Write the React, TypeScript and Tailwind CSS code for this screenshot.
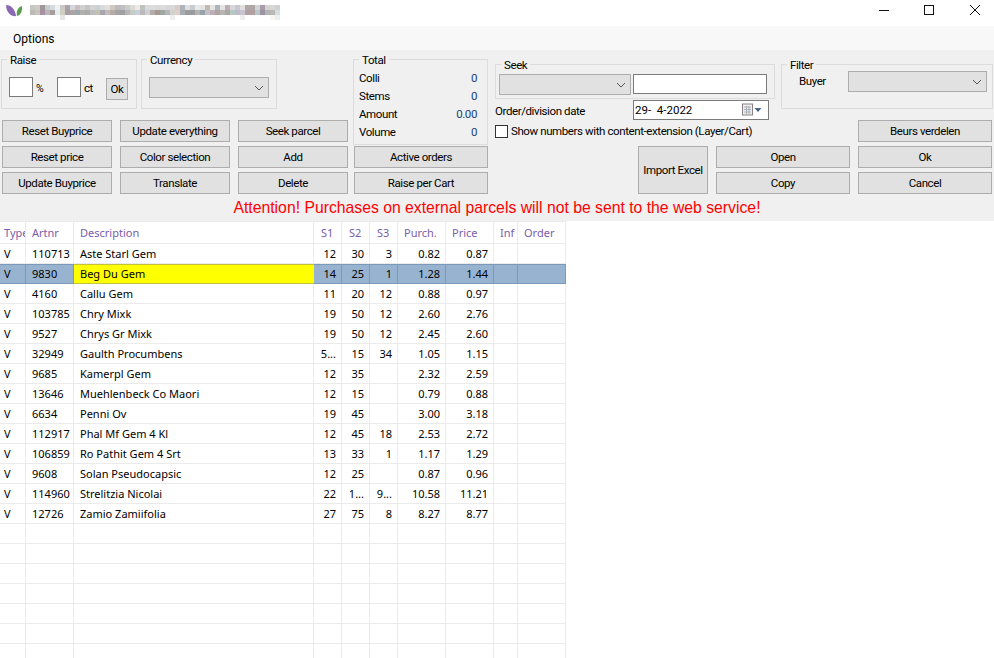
import React from "react";

const row1 = "c9c7c4 cdcbc8 a09696 c3cbd1 d6dbe0 eef0f2 cdc8c8 aaa3a8 d6d6dc c9bfc2 d0d0cc c4c4c4 d4d4d4 c9d3d2 d9dadc e2dfe0 d3c8c0 bcbcbc c0c0c2 c9cdcc d9dbd8 f0e8e4 bfc2c0 d9dade dcdcdc d9d9d9 dcdcdc d8d8dc dcd8d8 d9ccc8 b0b4b8 e0e0e4 c8ccd0 e8e8e4 e0e4e4 c4b8b4 e4e4e4 b0b4b8 e4e4e4 c0acb4 d8d8dc c8c8d0 e0e0e0 b0a8a8 b0a4a4 d0d4d4 a89cac d4d4d0 d8d8d4 d0d0d4".split(" ");
const row2 = "bdb9b4 c7c4bd ab8fa5 bbb8bb a59e9b e2ecf4 d0cfc0 a59ea6 aca4a6 9fa7ae b0b0ac acacac bcbcbc c4c0b2 a8a6ae c0bcb8 b8aaa8 a4a4a4 a0a0a2 b8b6b4 c8cac8 c4d0dc bcbab8 cfcfd8 b4aca8 a89890 a0a8a4 b4b8b8 d4d0cc e0d0c8 a8acb4 9c9c9c 9c9ca0 b4b4b4 98a4ac c4c0c8 bcb0b8 b0a4a0 b8b4b4 a8a8a4 b8c8c0 bcbccc c8c4d0 b0a0a0 b0a0a0 b8c8c4 9c94a4 b4b4b4 b8b8b8 d8dcdc".split(" ");
const row3: [number, string][] = [[60, "e6e6e2"], [170, "eeeeee"], [240, "eeeeee"], [270, "fbf6f0"], [275, "e8f0f4"]];

function Mosaic() {
  return (
    <svg width="250" height="15" viewBox="30 5 250 15" className="ml-2 block" shapeRendering="crispEdges">
      {row1.map((c, i) => <rect key={"a" + i} x={30 + i * 5} y={5} width={5} height={5} fill={"#" + c} />)}
      {row2.map((c, i) => <rect key={"b" + i} x={30 + i * 5} y={10} width={5} height={5} fill={"#" + c} />)}
      {row3.map(([x, c]) => <rect key={x} x={x} y={15} width={5} height={5} fill={"#" + c} />)}
    </svg>
  );
}

function Logo() {
  return (
    <svg width="16" height="12" viewBox="0 0 16 12" className="ml-[6px] block">
      <path d="M0 0 C4 0 9 3 10 11 C5 12 0 7 0 0Z" fill="#8a68b4" />
      <path d="M16 1 C16.5 6 15 10 11 11 C10 6 12 2 16 1Z" fill="#58a04c" />
    </svg>
  );
}

function Btn({ children, className = "" }: { children: React.ReactNode; className?: string }) {
  return (
    <button className={"flex h-[22px] items-center justify-center border border-[#adadad] bg-[#e1e1e1] pt-[2px] text-black " + className}>
      {children}
    </button>
  );
}

function Select({ className = "" }: { className?: string }) {
  return (
    <div className={"flex h-[21px] items-center justify-end border border-[#adadad] bg-[#e1e1e1] pr-[4px] " + className}>
      <svg width="10" height="6" viewBox="0 0 10 6"><path d="M1 1 L5 5 L9 1" fill="none" stroke="#555" strokeWidth="1" /></svg>
    </div>
  );
}

function Legend({ children, className = "" }: { children: React.ReactNode; className?: string }) {
  return <legend className={"h-[16px] px-[3px] pt-px leading-[16px] text-black " + className}>{children}</legend>;
}

const gridCols = "grid grid-cols-[26px_48px_240px_28px_28px_28px_48px_48px_24px_48px] w-[566px]";
const headers: [string, string][] = [
  ["Type", "pl-[4px]"], ["Artnr", "pl-[6px]"], ["Description", "pl-[6px]"], ["S1", "pl-[7px]"], ["S2", "pl-[7px]"],
  ["S3", "pl-[7px]"], ["Purch.", "pl-[6px]"], ["Price", "pl-[6px]"], ["Inf", "pl-[6px]"], ["Order", "pl-[6px]"],
];
const data: string[][] = [
  ["V", "110713", "Aste Starl Gem", "12", "30", "3", "0.82", "0.87"],
  ["V", "9830", "Beg Du Gem", "14", "25", "1", "1.28", "1.44"],
  ["V", "4160", "Callu Gem", "11", "20", "12", "0.88", "0.97"],
  ["V", "103785", "Chry Mixk", "19", "50", "12", "2.60", "2.76"],
  ["V", "9527", "Chrys Gr Mixk", "19", "50", "12", "2.45", "2.60"],
  ["V", "32949", "Gaulth Procumbens", "5...", "15", "34", "1.05", "1.15"],
  ["V", "9685", "Kamerpl Gem", "12", "35", "", "2.32", "2.59"],
  ["V", "13646", "Muehlenbeck Co Maori", "12", "15", "", "0.79", "0.88"],
  ["V", "6634", "Penni Ov", "19", "45", "", "3.00", "3.18"],
  ["V", "112917", "Phal Mf Gem 4 Kl", "12", "45", "18", "2.53", "2.72"],
  ["V", "106859", "Ro Pathit Gem 4 Srt", "13", "33", "1", "1.17", "1.29"],
  ["V", "9608", "Solan Pseudocapsic", "12", "25", "", "0.87", "0.96"],
  ["V", "114960", "Strelitzia Nicolai", "22", "1...", "9...", "10.58", "11.21"],
  ["V", "12726", "Zamio Zamiifolia", "27", "75", "8", "8.27", "8.77"],
];
const empty = ["", "", "", "", "", "", "", ""];
const rows = [...data, ...Array.from({ length: 7 }, () => empty)];

function Row({ cells, selected }: { cells: string[]; selected: boolean }) {
  const all = [...cells, "", ""];
  return (
    <div className={gridCols + " h-[20px]"}>
      {all.map((t, i) => {
        const align = i <= 2 ? (i === 0 ? "pl-[4px]" : "pl-[6px]") : "justify-end pr-[5px]";
        let tone = "border-r border-b border-[#ebebeb] bg-white pt-[2px]";
        if (selected) tone = i === 2
          ? "border-y border-[#c4c43c] bg-[#ffff00]"
          : "border-r border-y border-[#7b99b9] bg-[#98b3d0]";
        return (
          <div key={i} className={"flex items-center overflow-hidden whitespace-nowrap " + align + " " + tone}>
            {t}
          </div>
        );
      })}
    </div>
  );
}

export default function App() {
  return (
    <div className="h-[658px] w-[994px] overflow-hidden bg-white font-['Roboto',sans-serif] text-[11.5px] text-black">
      {/* Title bar */}
      <div className="flex h-[26px] items-start bg-white pt-[5px]">
        <Logo />
        <Mosaic />
        <div className="ml-auto flex items-center">
          <svg width="10" height="10" viewBox="0 0 10 10" className="mr-[35px]"><path d="M0 5.5 H10" stroke="#111" /></svg>
          <svg width="10" height="10" viewBox="0 0 10 10" className="mr-[36px]"><rect x="0.5" y="0.5" width="9" height="9" fill="none" stroke="#111" /></svg>
          <svg width="10" height="10" viewBox="0 0 10 10" className="mr-[14px]"><path d="M0 0 L10 10 M10 0 L0 10" stroke="#111" /></svg>
        </div>
      </div>

      {/* Menu */}
      <div className="flex h-[24px] items-center bg-[#f8f8f8] pl-[13px] pt-[2px] text-[12px]">Options</div>

      {/* Toolbar */}
      <div className="h-[171px] bg-[#f0f0f0] pt-px tracking-[-0.4px]">
        <div className="flex h-[143px]">
          {/* Left column */}
          <div className="w-[352px] pl-px">
            <div className="flex gap-[4px]">
              <fieldset className="h-[58px] w-[136px] border border-[#dcdcdc]">
                <Legend className="ml-[5px]">Raise</Legend>
                <div className="flex items-start pl-[7px] pt-[10px]">
                  <div className="h-[20px] w-[24px] border border-[#7a7a7a] bg-white" />
                  <span className="mt-[4px] w-[24px] pl-[3px] text-[10.5px]">%</span>
                  <div className="h-[20px] w-[24px] border border-[#7a7a7a] bg-white" />
                  <span className="mt-[3px] w-[25px] pl-[3px]">ct</span>
                  <Btn className="mt-px w-[22px]">Ok</Btn>
                </div>
              </fieldset>
              <fieldset className="h-[58px] w-[136px] border border-[#dcdcdc]">
                <Legend className="ml-[5px]">Currency</Legend>
                <div className="pl-[7px] pt-[10px]"><Select className="w-[120px]" /></div>
              </fieldset>
            </div>
            <div className="ml-px mt-[11px] grid grid-cols-[110px_110px_110px] gap-x-[8px] gap-y-[4px]">
              {["Reset Buyprice", "Update everything", "Seek parcel", "Reset price", "Color selection", "Add", "Update Buyprice", "Translate", "Delete"].map((t) => (
                <Btn key={t}>{t}</Btn>
              ))}
            </div>
          </div>

          {/* Total column */}
          <div className="w-[142px] pl-px">
            <fieldset className="h-[94px] w-[135px] border border-[#dcdcdc]">
              <Legend className="ml-[5px]">Total</Legend>
              <div className="pl-[5px] pr-[10px] pt-[3px]">
                {[["Colli", "0"], ["Stems", "0"], ["Amount", "0.00"], ["Volume", "0"]].map(([k, v]) => (
                  <div key={k} className="flex h-[18px] items-center justify-between">
                    <span>{k}</span>
                    <span className="text-[#1c3f7a]">{v}</span>
                  </div>
                ))}
              </div>
            </fieldset>
            <div className="ml-px mt-[1px] flex w-[134px] flex-col gap-[4px]">
              <Btn>Active orders</Btn>
              <Btn>Raise per Cart</Btn>
            </div>
          </div>

          {/* Right region */}
          <div className="flex w-[500px] flex-col">
            <div className="flex">
              <div className="w-[287px] pl-px pt-[5px]">
                <fieldset className="h-[43px] w-[280px] border border-[#dcdcdc]">
                  <Legend className="ml-[5px]">Seek</Legend>
                  <div className="flex items-start gap-[2px] pl-[3px] pt-[2px]">
                    <Select className="w-[132px]" />
                    <div className="h-[20px] w-[134px] border border-[#7a7a7a] bg-white" />
                  </div>
                </fieldset>
                <div className="mt-[1px] flex h-[20px] items-center">
                  <span className="w-[138px] pt-[3px]">Order/division date</span>
                  <div className="flex h-[20px] w-[136px] items-center border border-[#7a7a7a] bg-white pl-[1px] pr-[6px]">
                    <span className="whitespace-pre pt-[2px] tracking-normal">29-  4-2022</span>
                    <svg width="20" height="14" viewBox="0 0 20 14" className="ml-auto">
                      <rect x="0.5" y="1" width="10" height="11" fill="#eee" stroke="#8a8080" />
                      <path d="M2 4 H9 M2 6.5 H9 M2 9 H9 M4.5 3 V11 M7 3 V11" stroke="#aab0b8" strokeWidth="1" />
                      <path d="M12.5 5 H19.5 L16 9Z" fill="#4a6285" />
                    </svg>
                  </div>
                </div>
                <div className="mt-[4px] flex h-[14px] items-center">
                  <span className="h-[13px] w-[13px] border border-[#333] bg-white" />
                  <span className="ml-[3px] whitespace-nowrap pt-[2px]">Show numbers with content-extension (Layer/Cart)</span>
                </div>
              </div>
              <div className="w-[213px]">
                <div className="pt-[5px]">
                  <fieldset className="h-[53px] w-[212px] border border-[#dcdcdc]">
                    <Legend className="ml-[5px]">Filter</Legend>
                    <div className="flex items-start">
                      <span className="ml-[17px] mt-px w-[49px]">Buyer</span>
                      <Select className="-mt-px w-[139px]" />
                    </div>
                  </fieldset>
                </div>
                <Btn className="ml-[77px] mt-[11px] w-[134px]">Beurs verdelen</Btn>
              </div>
            </div>
            <div className="ml-[144px] mt-[4px] flex gap-[8px]">
              <Btn className="h-[48px] w-[70px]">Import Excel</Btn>
              <div className="flex w-[134px] flex-col gap-[4px]">
                <Btn>Open</Btn>
                <Btn>Copy</Btn>
              </div>
              <div className="flex w-[134px] flex-col gap-[4px]">
                <Btn>Ok</Btn>
                <Btn>Cancel</Btn>
              </div>
            </div>
          </div>
        </div>
        <div className="mt-[4px] text-center font-['Liberation_Sans',sans-serif] text-[15.75px] leading-[20px] tracking-normal text-[#ff0000]">
          Attention! Purchases on external parcels will not be sent to the web service!
        </div>
      </div>

      {/* Table */}
      <div className="font-['Noto_Sans',sans-serif] text-[11px]">
        <div className={gridCols + " h-[23px] text-[#7a5cab]"}>
          {headers.map(([h, p]) => (
            <div key={h} className={"flex items-center overflow-hidden whitespace-nowrap border-y border-r border-[#ebebeb] pt-[2px] " + p}>{h}</div>
          ))}
        </div>
        {rows.map((r, i) => <Row key={i} cells={r} selected={i === 1} />)}
      </div>
    </div>
  );
}
